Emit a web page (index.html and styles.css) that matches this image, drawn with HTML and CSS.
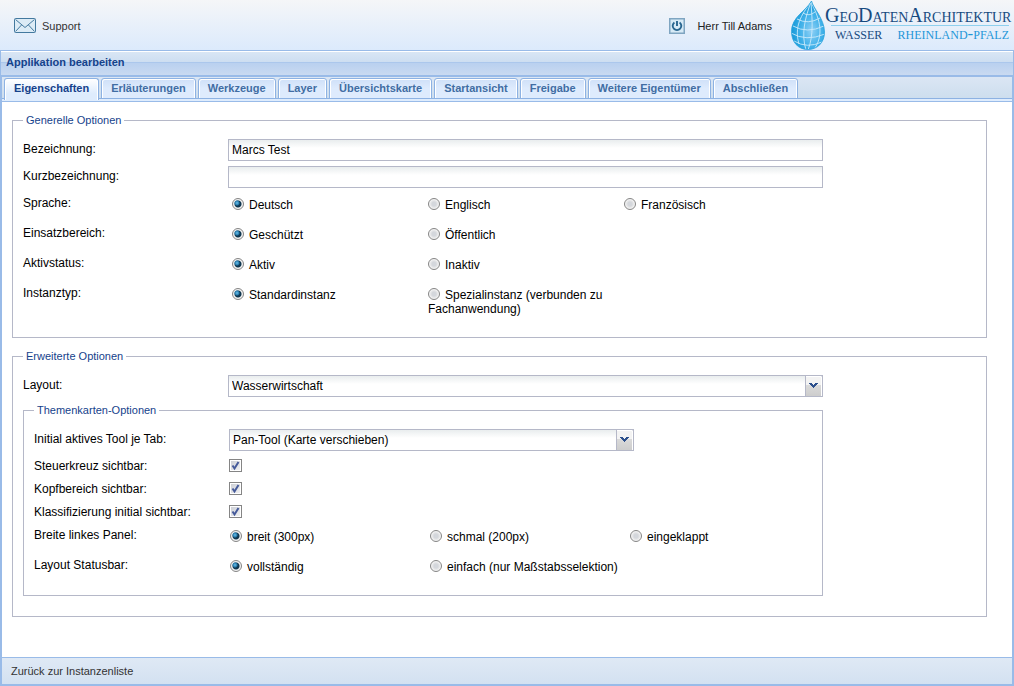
FILE: index.html
```html
<!DOCTYPE html>
<html lang="de">
<head>
<meta charset="utf-8">
<title>Applikation bearbeiten</title>
<link rel="stylesheet" href="styles.css">
</head>
<body>
<div class="app">
  <header class="topbar">
    <a class="toplink" href="#">
      <svg class="mail" viewBox="0 0 22 16" width="22" height="16" fill="none" stroke="#43799f" aria-hidden="true">
        <rect x="0.5" y="0.5" width="21" height="14" rx="1" fill="#dcebf6"/>
        <path d="M1.5 1.5 11 9.5 20.5 1.5M1.5 13.5 7.5 7M20.5 13.5 14.5 7"/>
      </svg>
      <span>Support</span>
    </a>
    <div class="account">
      <button class="power" type="button" aria-label="Abmelden">
        <svg viewBox="0 0 16 16" width="16" height="16" fill="none" aria-hidden="true">
          <rect x="0.75" y="0.75" width="14.5" height="14.5" fill="#d7eaf6" stroke="#7fa5c1" stroke-width="1.5"/>
          <path d="M5.4 4.4a4.300 4.300 0 1 0 5.2 0M8 3v5" stroke="#27658f" stroke-width="1.9"/>
        </svg>
      </button>
      <span>Herr Till Adams</span>
    </div>
    <div class="brand">
      <svg viewBox="0 0 34 50" width="34" height="50" aria-hidden="true">
        <defs>
          <radialGradient id="water" cx="0.6" cy="0.62" r="0.6">
            <stop offset="0" stop-color="#8fd0f5"/>
            <stop offset="0.5" stop-color="#45b3ea"/>
            <stop offset="1" stop-color="#1498d8"/>
          </radialGradient>
          <clipPath id="drop"><path d="M20.500 1C22 8 33.500 19 33.500 32C33.500 43 26 49.500 17 49.500C7 49.500 0.500 42 0.500 31.500C0.500 17 15 11 20.500 1Z"/></clipPath>
        </defs>
        <g clip-path="url(#drop)">
          <path d="M0 0H34V50H0Z" fill="url(#water)"/>
          <path d="M20 2C10 15 3 27 8 44M20 2C14 18 10 34 15 50M20 2C21 18 23 35 17 50M20 2C27 16 34 32 24 48M12 13Q18 17 24 12M6 19Q17 25 29 18M2 26Q16 34 33 26M0 33Q15 42 34 34M3 41Q16 49 31 42" fill="none" stroke="#c9eafb" stroke-width="0.9"/>
        </g>
        <path d="M20.500 1C22 8 33.500 19 33.500 32C33.500 43 26 49.500 17 49.500C7 49.500 0.500 42 0.500 31.500C0.500 17 15 11 20.500 1Z" fill="none" stroke="#2aa3dd" stroke-width="0.8"/>
      </svg>
      <div class="brand-text">
        <div class="brand-name">GeoDatenArchitektur</div>
        <div class="brand-sub"><span>wasser</span><span class="brand-land">rheinland-pfalz</span></div>
      </div>
    </div>
  </header>

  <main class="window">
    <h1 class="window-title">Applikation bearbeiten</h1>
    <div class="window-frame">
      <div class="tabs" role="tablist">
        <button class="tab active" type="button" role="tab" aria-selected="true">Eigenschaften</button>
        <button class="tab" type="button" role="tab">Erläuterungen</button>
        <button class="tab" type="button" role="tab">Werkzeuge</button>
        <button class="tab" type="button" role="tab">Layer</button>
        <button class="tab" type="button" role="tab">Übersichtskarte</button>
        <button class="tab" type="button" role="tab">Startansicht</button>
        <button class="tab" type="button" role="tab">Freigabe</button>
        <button class="tab" type="button" role="tab">Weitere Eigentümer</button>
        <button class="tab" type="button" role="tab">Abschließen</button>
      </div>

      <form class="form">
        <fieldset class="group general">
          <legend>Generelle Optionen</legend>
          <div class="rows">
            <div class="row">
              <label class="caption" for="name">Bezeichnung:</label>
              <input class="text" id="name" type="text" value="Marcs Test">
            </div>
            <div class="row">
              <label class="caption" for="short">Kurzbezeichnung:</label>
              <input class="text" id="short" type="text">
            </div>
            <div class="row" role="radiogroup" aria-labelledby="c-lang">
              <span class="caption" id="c-lang">Sprache:</span>
              <div class="choices">
                <label><input type="radio" name="lang" checked>Deutsch</label>
                <label><input type="radio" name="lang">Englisch</label>
                <label><input type="radio" name="lang">Französisch</label>
              </div>
            </div>
            <div class="row" role="radiogroup" aria-labelledby="c-area">
              <span class="caption" id="c-area">Einsatzbereich:</span>
              <div class="choices">
                <label><input type="radio" name="area" checked>Geschützt</label>
                <label><input type="radio" name="area">Öffentlich</label>
              </div>
            </div>
            <div class="row" role="radiogroup" aria-labelledby="c-state">
              <span class="caption" id="c-state">Aktivstatus:</span>
              <div class="choices">
                <label><input type="radio" name="state" checked>Aktiv</label>
                <label><input type="radio" name="state">Inaktiv</label>
              </div>
            </div>
            <div class="row" role="radiogroup" aria-labelledby="c-type">
              <span class="caption" id="c-type">Instanztyp:</span>
              <div class="choices">
                <label><input type="radio" name="type" checked>Standardinstanz</label>
                <label><input type="radio" name="type">Spezialinstanz (verbunden zu Fachanwendung)</label>
              </div>
            </div>
          </div>
        </fieldset>

        <fieldset class="group extended">
          <legend>Erweiterte Optionen</legend>
          <div class="rows">
            <div class="row">
              <label class="caption" for="layout">Layout:</label>
              <div class="combo">
                <select id="layout"><option>Wasserwirtschaft</option></select>
                <span class="trigger"><svg viewBox="0 0 9 6" width="9" height="6" shape-rendering="crispEdges" aria-hidden="true"><path d="M0 0h3v1h1v1h1v-1h1v-1h3v1h-1v1h-1v1h-1v1h-1v1h-1v-1h-1v-1h-1v-1h-1v-1h-1z" fill="#2c4f8c"/></svg></span>
              </div>
            </div>
          </div>
          <fieldset class="group themes">
            <legend>Themenkarten-Optionen</legend>
            <div class="rows">
              <div class="row">
                <label class="caption" for="tool">Initial aktives Tool je Tab:</label>
                <div class="combo short">
                  <select id="tool"><option>Pan-Tool (Karte verschieben)</option></select>
                  <span class="trigger"><svg viewBox="0 0 9 6" width="9" height="6" shape-rendering="crispEdges" aria-hidden="true"><path d="M0 0h3v1h1v1h1v-1h1v-1h3v1h-1v1h-1v1h-1v1h-1v1h-1v-1h-1v-1h-1v-1h-1v-1h-1z" fill="#2c4f8c"/></svg></span>
                </div>
              </div>
              <div class="row check">
                <label class="caption" for="cross">Steuerkreuz sichtbar:</label>
                <span class="box"><input id="cross" type="checkbox" checked><svg class="tick" viewBox="0 0 13 13" width="13" height="13" aria-hidden="true"><path d="M3.5 6.5 5.5 9.5 9.500 3" fill="none" stroke="#455a9a" stroke-width="2"/></svg></span>
              </div>
              <div class="row check">
                <label class="caption" for="head">Kopfbereich sichtbar:</label>
                <span class="box"><input id="head" type="checkbox" checked><svg class="tick" viewBox="0 0 13 13" width="13" height="13" aria-hidden="true"><path d="M3.5 6.5 5.5 9.5 9.500 3" fill="none" stroke="#455a9a" stroke-width="2"/></svg></span>
              </div>
              <div class="row check">
                <label class="caption" for="classes">Klassifizierung initial sichtbar:</label>
                <span class="box"><input id="classes" type="checkbox" checked><svg class="tick" viewBox="0 0 13 13" width="13" height="13" aria-hidden="true"><path d="M3.5 6.5 5.5 9.5 9.500 3" fill="none" stroke="#455a9a" stroke-width="2"/></svg></span>
              </div>
              <div class="row" role="radiogroup" aria-labelledby="c-width">
                <span class="caption" id="c-width">Breite linkes Panel:</span>
                <div class="choices">
                  <label><input type="radio" name="width" checked>breit (300px)</label>
                  <label><input type="radio" name="width">schmal (200px)</label>
                  <label><input type="radio" name="width">eingeklappt</label>
                </div>
              </div>
              <div class="row" role="radiogroup" aria-labelledby="c-status">
                <span class="caption" id="c-status">Layout Statusbar:</span>
                <div class="choices">
                  <label><input type="radio" name="status" checked>vollständig</label>
                  <label><input type="radio" name="status">einfach (nur Maßstabsselektion)</label>
                </div>
              </div>
            </div>
          </fieldset>
        </fieldset>
      </form>

      <footer class="bottombar"><button type="button">Zurück zur Instanzenliste</button></footer>
    </div>
  </main>
</div>
</body>
</html>
```
FILE: styles.css
```css
* { box-sizing: border-box; }

body {
  margin: 0;
  font: 12px/14px "Liberation Sans", Arial, sans-serif;
  color: #000;
  background: #fff;
}

button, input, select { font: inherit; color: inherit; margin: 0; }

.app { display: flex; flex-direction: column; min-height: 100vh; }

/* Page header */
.topbar {
  display: flex;
  align-items: center;
  height: 50px;
  padding: 0 5px 0 14px;
  background: linear-gradient(#f5f6f8, #dceafc);
  font-size: 11px;
  color: #333;
}
.toplink, .account { display: flex; align-items: center; padding-top: 2px; }
.toplink { gap: 6px; color: inherit; text-decoration: none; }
.toplink svg, .power svg, .brand svg { display: block; }
.account { gap: 12px; margin-left: auto; color: #222; }
.power { padding: 0; border: 0; background: none; }
.brand { display: flex; margin-left: 19px; }
.brand-text {
  width: 184px;
  padding-top: 5px;
  font-family: "Liberation Serif", "Times New Roman", serif;
  font-variant: small-caps;
  white-space: nowrap;
  color: #174a80;
}
.brand-name {
  padding-bottom: 1px;
  font-size: 20px;
  line-height: 20px;
  background: linear-gradient(#8fd0ee, #8fd0ee) 6px 100% / 100% 1px no-repeat;
}
.brand-sub {
  display: flex;
  justify-content: space-between;
  padding-left: 10px;
  font-size: 17px;
  line-height: 15px;
}
.brand-land { color: #1f96d8; }

/* Window */
.window { display: flex; flex: 1; flex-direction: column; }
.window-title {
  margin: 0;
  padding: 4px 5px 5px;
  border: 1px solid #99bbe8;
  border-bottom: 0;
  font-size: 11px;
  line-height: 15px;
  color: #15428b;
  background: linear-gradient(#fff 1px, #d9e6f5 1px, #cddef1 11px, #abc7ec 11px, #abc7ec 12px, #b9d0ef 12px, #c9daf1);
}
.window-frame {
  display: flex;
  flex: 1;
  flex-direction: column;
  border: 2px solid #99bbe8;
}

/* Tabs */
.tabs {
  display: flex;
  gap: 2px;
  height: 25px;
  padding: 1px 2px 0;
  background: linear-gradient(#dbe6f4, #cddeee 21px, #8db2e3 21px, #8db2e3 22px, #deecfd 22px, #deecfd 24px, #99bbe8 24px);
}
.tab {
  height: 21px;
  padding: 0 9px;
  border: 1px solid #8db2e3;
  border-radius: 3px 3px 0 0;
  box-shadow: inset 1px 1px #fff, inset -1px 0 #fff;
  background: linear-gradient(#cfe0f8, #deebfd 50%);
  font-weight: bold;
  font-size: 11px;
  line-height: 19px;
  white-space: nowrap;
  color: #416da3;
}
.tab.active {
  height: 22px;
  padding-bottom: 2px;
  border-bottom: 0;
  background: linear-gradient(#fff, #deecfd 70%);
  color: #15428b;
}

/* Form */
.form { flex: 1; padding: 12px 25px 12px 10px; background: #fff; }
.group {
  min-width: 0;
  margin: 0;
  padding: 12px 10px 21px;
  border: 1px solid #b5b8c8;
}
.group legend {
  padding: 0 3px;
  font-size: 11px;
  line-height: 13px;
  color: #15428b;
}
.extended { margin-top: 12px; padding-bottom: 20px; }
.themes { max-width: 800px; margin-top: 7px; padding-bottom: 15px; }

.rows { display: flex; flex-direction: column; gap: 5px; }
.row { display: flex; align-items: flex-start; min-height: 25px; }
.row:has(.text), .row:has(.combo) { min-height: 22px; }
.row.check { min-height: 18px; }
.caption { flex: none; width: 205px; padding-top: 3px; }
.themes .caption { width: 195px; }

.text, .combo select {
  width: 100%;
  height: 22px;
  padding: 0 3px;
  border: 1px solid #b5b8c8;
  border-radius: 0;
  background: linear-gradient(#e9edee, #fff 8px);
}
.text, .combo { max-width: 595px; flex: 1; }
.combo { position: relative; }
.combo.short { max-width: 405px; }
.combo select { display: block; appearance: none; }
.trigger {
  position: absolute;
  inset: 0 0 0 auto;
  display: grid;
  place-items: center;
  width: 18px;
  padding: 0 1px 1px 0;
  border: 1px solid #b5b8c8;
  border-radius: 0 2px 0 0;
  box-shadow: inset -1px 1px #fff;
  background: linear-gradient(#f3f3f3 45%, #dadada 45%, #cdcdcd);
  pointer-events: none;
}

.choices {
  display: grid;
  grid-template-columns: repeat(3, 196px);
  padding: 5px 0 0 4px;
}
.themes .choices { grid-template-columns: repeat(3, 200px); padding-left: 1px; }

input[type="radio"] {
  appearance: none;
  width: 12px;
  height: 12px;
  margin: 0 5px 0 0;
  border: 1px solid #858585;
  border-radius: 50%;
  vertical-align: -1px;
  background: radial-gradient(circle, #d4d7dc 2px, #e0e1e3 3px, #f7f7f7 5px);
}
input[type="radio"]:checked {
  background: radial-gradient(circle at 4px 4px, #6ec1ea 0, #257bad 2px, transparent 3px), radial-gradient(circle, #103750 3px, #f2f2f2 4px);
}

.box { position: relative; display: block; margin-top: 3px; }
.box input {
  appearance: none;
  display: block;
  width: 13px;
  height: 13px;
  border: 1px solid #858585;
  box-shadow: inset 0 0 0 1px #fff;
  background: linear-gradient(135deg, #c9ccd3, #f3f3f4);
}
.tick { position: absolute; inset: 0; pointer-events: none; visibility: hidden; }
.box input:checked + .tick { visibility: visible; }

/* Footer toolbar */
.bottombar {
  height: 27px;
  padding: 5px 9px;
  border-top: 1px solid #99bbe8;
  background: linear-gradient(#dfe9f5, #d3e1f1);
}
.bottombar button {
  display: block;
  padding: 0;
  border: 0;
  background: none;
  font-size: 11px;
  line-height: 16px;
  color: #333;
}
```
